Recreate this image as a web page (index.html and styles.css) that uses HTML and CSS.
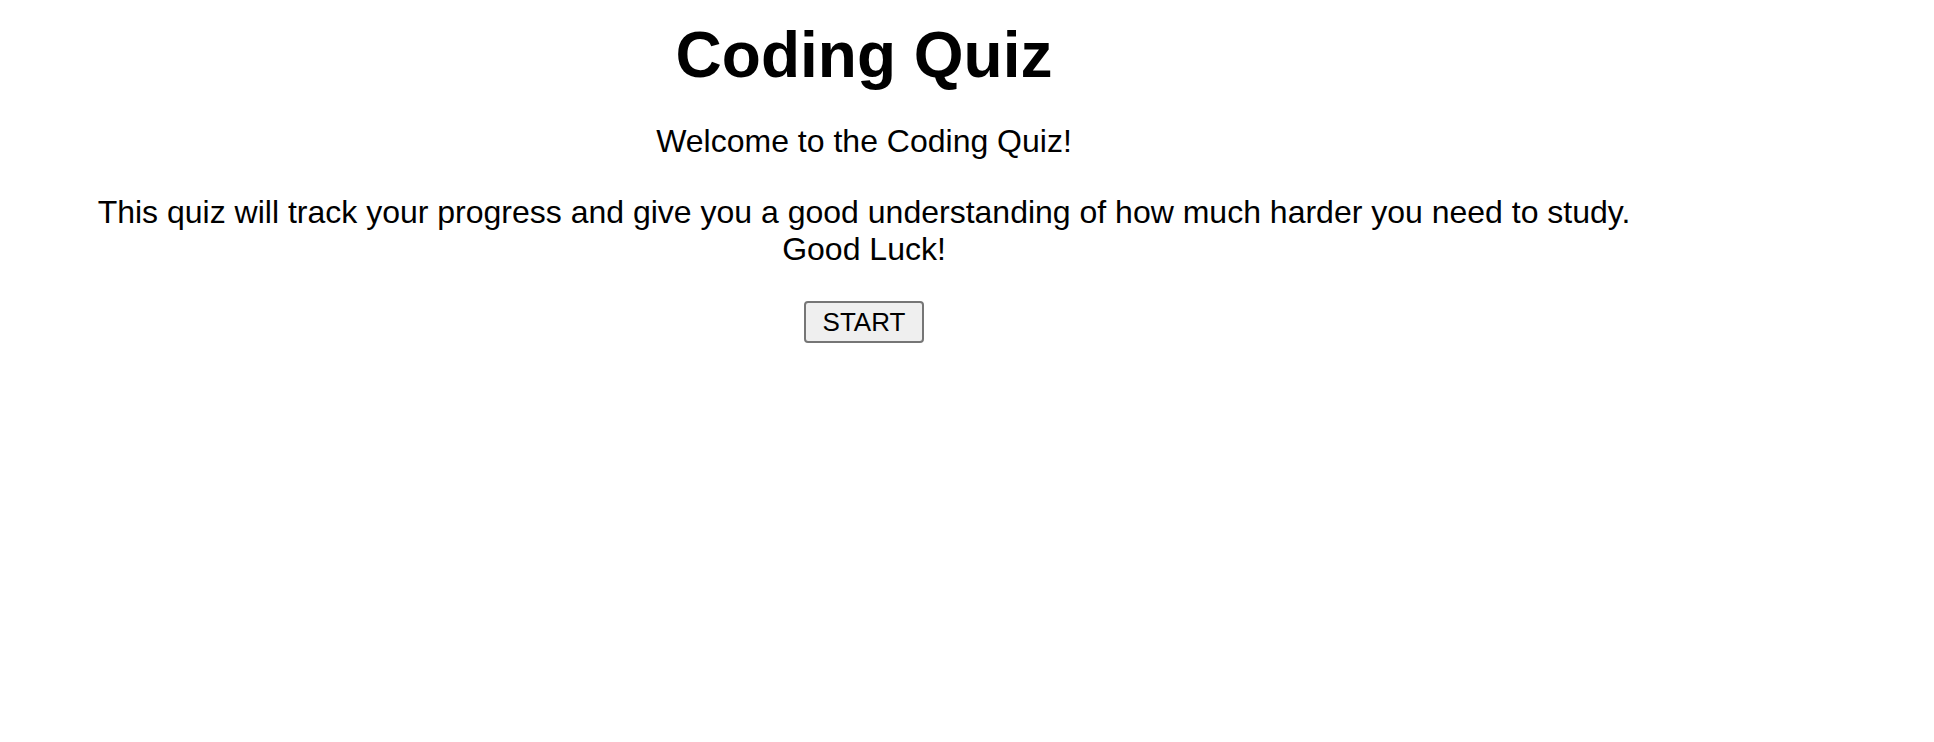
FILE: index.html
```html
<!DOCTYPE html>
<html lang="en">
<head>
<meta charset="utf-8">
<title>Coding Quiz</title>
<link rel="stylesheet" href="styles.css">
</head>
<body>
<main class="page">
  <h1 class="title">Coding Quiz</h1>
  <p class="welcome">Welcome to the Coding Quiz!</p>
  <p class="intro">This quiz will track your progress and give you a good understanding of how much harder you need to study.<br>Good Luck!</p>
  <button class="start-btn" type="button">START</button>
</main>
</body>
</html>
```

FILE: styles.css
```css
html, body {
  margin: 0;
  padding: 0;
  background: #ffffff;
}

body {
  font-family: "Liberation Sans", Arial, sans-serif;
  color: #000000;
}

.page {
  width: 1728px;
  display: flex;
  flex-direction: column;
  align-items: center;
  text-align: center;
}

.title {
  font-size: 64px;
  font-weight: bold;
  line-height: normal;
  margin: 18px 0 0;
}

.welcome {
  font-size: 32px;
  line-height: normal;
  margin: 31px 0 0;
}

.intro {
  font-size: 32px;
  line-height: normal;
  margin: 34px 0 0;
}

.start-btn {
  margin-top: 33px;
  font-family: "Liberation Sans", Arial, sans-serif;
  font-size: 26px;
  line-height: normal;
  padding: 3.5px 16.5px;
  color: #000000;
  background: #efefef;
  border: 2px solid #767676;
  border-radius: 4px;
}
```
